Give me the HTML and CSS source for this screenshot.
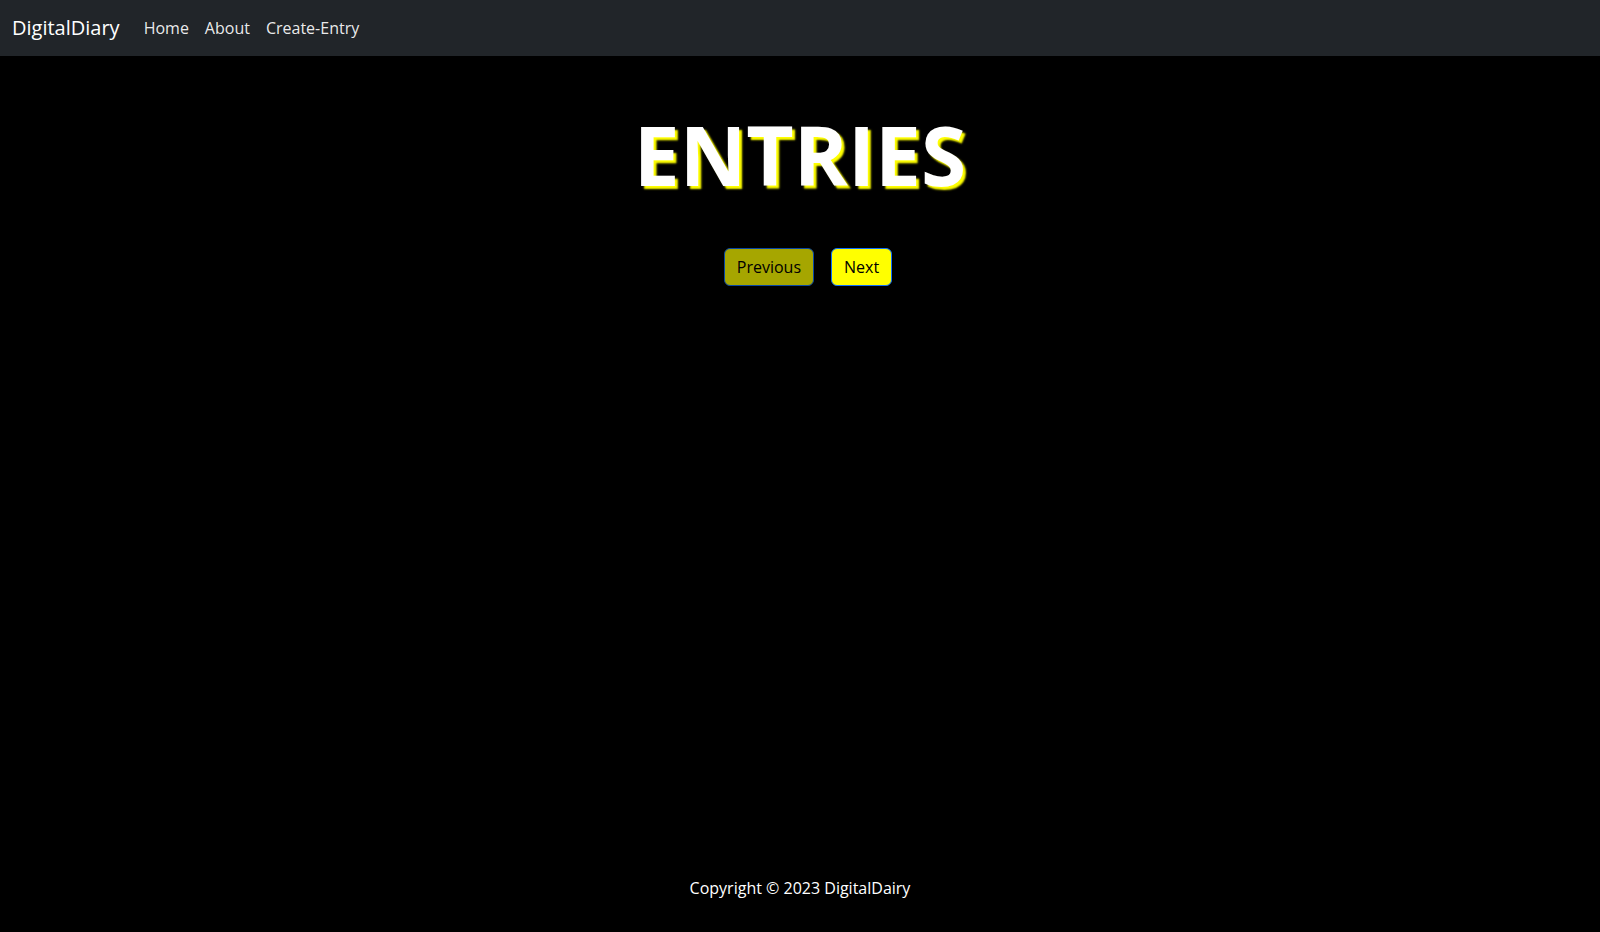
FILE: index.html
```html
<!DOCTYPE html>
<html lang="en">
<head>
<meta charset="utf-8">
<title>DigitalDiary</title>
<link rel="stylesheet" href="styles.css">
</head>
<body>
<div class="page">
  <nav class="navbar">
    <a class="brand" href="#">DigitalDiary</a>
    <ul class="nav">
      <li><a class="nav-link" href="#">Home</a></li>
      <li><a class="nav-link" href="#">About</a></li>
      <li><a class="nav-link" href="#">Create-Entry</a></li>
    </ul>
  </nav>
  <main class="main">
    <h1 class="title">ENTRIES</h1>
    <div class="pager">
      <button class="btn btn-disabled" disabled>Previous</button>
      <button class="btn">Next</button>
    </div>
  </main>
  <footer class="footer">Copyright © 2023 DigitalDairy</footer>
</div>
</body>
</html>
```

FILE: styles.css
```css
* { box-sizing: border-box; }
html, body { margin: 0; padding: 0; height: 100%; }
body {
  background: #000;
  color: #fff;
  font-family: "Open Sans", "Noto Sans", sans-serif;
  font-size: 16px;
  line-height: 1.5;
}
.page {
  min-height: 100%;
  display: flex;
  flex-direction: column;
}
.navbar {
  background: #212529;
  height: 56px;
  padding: 8px 12px;
  display: flex;
  align-items: center;
}
.brand {
  color: #fff;
  text-decoration: none;
  font-size: 20px;
  padding: 5px 0;
  margin-right: 16px;
  line-height: 30px;
}
.nav {
  list-style: none;
  margin: 0;
  padding: 0;
  display: flex;
}
.nav-link {
  display: block;
  padding: 8px 8px;
  color: rgba(255, 255, 255, 0.92);
  text-decoration: none;
}
.main {
  flex: 1;
  display: flex;
  flex-direction: column;
  align-items: center;
}
.title {
  margin: 49px 0 0;
  font-size: 82px;
  font-weight: 700;
  line-height: 1.2;
  color: #fff;
  text-shadow: 3px 3px 2px #ffff00;
}
.pager {
  margin-top: 45px;
  display: flex;
  gap: 17px;
  padding-left: 16px;
}
.btn {
  font-family: inherit;
  font-size: 16px;
  line-height: 24px;
  padding: 6px 12px;
  border: 1px solid #0d6efd;
  border-radius: 6px;
  background: #ffff00;
  color: #000;
  cursor: pointer;
}
.btn-disabled {
  opacity: 0.65;
  cursor: default;
}
.footer {
  text-align: center;
  padding: 0 0 32px;
  color: #fff;
}
```
